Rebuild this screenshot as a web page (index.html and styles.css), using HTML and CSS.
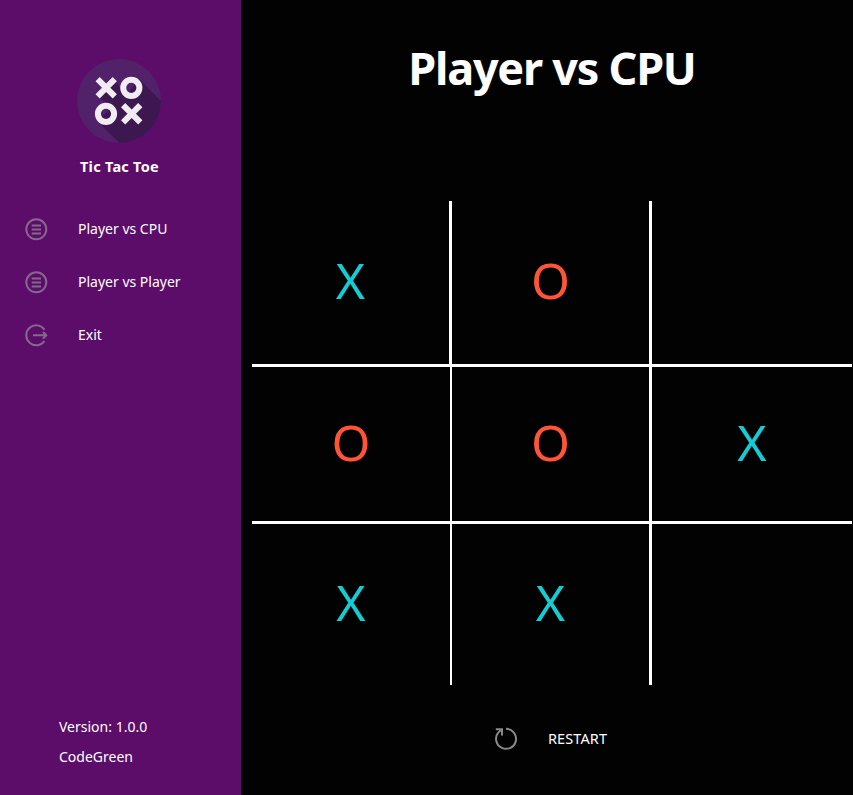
FILE: index.html
```html
<!DOCTYPE html>
<html lang="en">
<head>
<meta charset="utf-8">
<title>Tic Tac Toe</title>
<link rel="stylesheet" href="styles.css">
</head>
<body>
<div class="app">
  <aside class="sidebar">
    <svg class="logo" viewBox="0 0 84 84">
      <defs><clipPath id="disc"><circle cx="42" cy="42" r="42"/></clipPath></defs>
      <circle cx="42" cy="42" r="42" fill="#512169"/>
      <path clip-path="url(#disc)" fill="#3c1750" d="M62 20L100 58V100H59L20 62L36 48L20 37L38 20L48 38Z"/>
      <g fill="none" stroke="#f1ebf2" stroke-width="6">
        <path d="M20.6 20.2L37.8 37.4M37.8 20.2L20.6 37.4M46.1 46.2L63.3 63.4M63.3 46.2L46.1 63.4"/>
        <circle cx="54.3" cy="28.8" r="8.1"/>
        <circle cx="29" cy="54.8" r="8.1"/>
      </g>
    </svg>
    <h2 class="brand">Tic Tac Toe</h2>
    <nav class="menu">
      <a class="item"><svg class="icon" viewBox="0 0 24 24"><circle cx="12.3" cy="12.3" r="10"/><path d="M7.7 8.5h9.3M7.7 12.5h9.3M7.7 16.5h9.3"/></svg><span>Player vs CPU</span></a>
      <a class="item"><svg class="icon" viewBox="0 0 24 24"><circle cx="12.3" cy="12.3" r="10"/><path d="M7.7 8.5h9.3M7.7 12.5h9.3M7.7 16.5h9.3"/></svg><span>Player vs Player</span></a>
      <a class="item"><svg class="icon" viewBox="0 0 24 24"><path d="M20.5 6.6A10 10 0 1 0 20.5 18M9 12.3H22M19 9L22.3 12.3L19 15.6"/></svg><span>Exit</span></a>
    </nav>
    <footer class="about"><p>Version: 1.0.0</p><p>CodeGreen</p></footer>
  </aside>
  <main class="game">
    <h1 class="title">Player vs CPU</h1>
    <div class="board">
      <div class="cell x">X</div><div class="cell o">O</div><div class="cell"></div>
      <div class="cell o">O</div><div class="cell o">O</div><div class="cell x">X</div>
      <div class="cell x">X</div><div class="cell x">X</div><div class="cell"></div>
    </div>
    <button class="restart"><svg class="icon" viewBox="0 0 24 24"><path d="M12 2.8A10 10 0 1 1 4.2 6.6L8 3.3M1.8 3.3H8V9.5"/></svg><span>RESTART</span></button>
  </main>
</div>
</body>
</html>
```
FILE: styles.css
```css
* { box-sizing: border-box; }
body { margin: 0; background: #020202; color: #fff; font-family: "Noto Sans", "Open Sans", sans-serif; }
h1, h2, p { margin: 0; }
.app { display: flex; width: 853px; height: 795px; overflow: hidden; }
.sidebar { width: 241px; background: #5c0d6a; display: flex; flex-direction: column; padding-top: 59px; }
.logo { width: 84px; height: 84px; margin-left: 77px; }
.brand { margin: 13px 0 0 80px; font-size: 14.5px; line-height: 20px; letter-spacing: 0.25px; white-space: nowrap; }
.menu { margin-top: 26px; }
.item { display: flex; align-items: center; height: 53px; padding-left: 24px; font-size: 14px; white-space: nowrap; }
.icon { width: 24px; height: 24px; margin-right: 30px; flex: none; fill: none; stroke: #85698a; stroke-width: 2; }
.about { margin: auto 0 23px 59px; font-size: 14px; line-height: 30px; }
.game { width: 612px; padding-left: 11px; }
.title { width: 600px; height: 201px; padding-top: 38px; font-size: 45px; line-height: 60px; letter-spacing: -1.25px; text-align: center; white-space: nowrap; }
.board { display: grid; width: 600px; grid-template-columns: repeat(3, 200px); grid-template-rows: 166px 157px 161px; }
.cell { display: flex; justify-content: center; align-items: center; padding-bottom: 5px; font-size: 50px; line-height: 60px; border: 0 solid #fff; }
.cell:not(:nth-child(3n)) { border-right-width: 3px; }
.cell:nth-child(4), .cell:nth-child(7) { border-right-width: 2px; }
.cell:nth-child(-n+6) { border-bottom-width: 3px; }
.x { color: #12cdd3; }
.o { color: #ff5436; }
.restart { display: flex; align-items: center; margin: 41px 0 0 242px; padding: 0; border: 0; background: none; color: #fff; font: 14.5px/24px "Noto Sans", sans-serif; letter-spacing: 0.1px; }
.restart .icon { stroke: #898989; }
```
